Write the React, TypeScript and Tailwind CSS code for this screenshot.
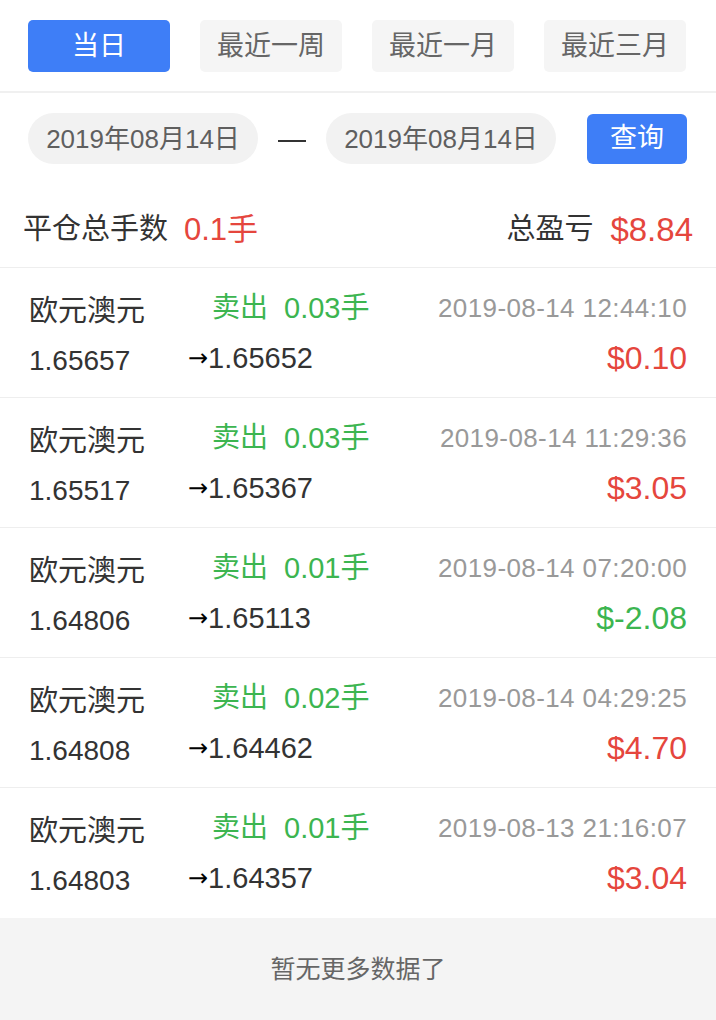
import React from "react";

interface Trade {
  name: string;
  lots: string;
  time: string;
  open: string;
  close: string;
  profit: string;
  win: boolean;
}

const trades: Trade[] = [
  { name: "欧元澳元", lots: "0.03手", time: "2019-08-14 12:44:10", open: "1.65657", close: "1.65652", profit: "$0.10", win: true },
  { name: "欧元澳元", lots: "0.03手", time: "2019-08-14 11:29:36", open: "1.65517", close: "1.65367", profit: "$3.05", win: true },
  { name: "欧元澳元", lots: "0.01手", time: "2019-08-14 07:20:00", open: "1.64806", close: "1.65113", profit: "$-2.08", win: false },
  { name: "欧元澳元", lots: "0.02手", time: "2019-08-14 04:29:25", open: "1.64808", close: "1.64462", profit: "$4.70", win: true },
  { name: "欧元澳元", lots: "0.01手", time: "2019-08-13 21:16:07", open: "1.64803", close: "1.64357", profit: "$3.04", win: true },
];

const tabs = ["当日", "最近一周", "最近一月", "最近三月"];

const TradeRow = ({ trade }: { trade: Trade }) => {
  return (
    <div className="h-[130px] border-b border-[#eeeeee] px-[29px] pt-[20px] last:border-b-0">
      <div className="flex items-center h-[40px]">
        <span className="w-[183px] text-[29px] text-[#333333] pt-[7px]">{trade.name}</span>
        <span className="text-[28px] text-[#3cb550]">卖出</span>
        <span className="ml-[16px] text-[29px] text-[#3cb550]">{trade.lots}</span>
        <span className="ml-auto text-[26px] tracking-[0.4px] text-[#999999]">{trade.time}</span>
      </div>
      <div className="flex items-center h-[40px] mt-[10px]">
        <span className="w-[159px] text-[28px] text-[#333333] pt-[6px]">{trade.open}</span>
        <span className="text-[24px] text-black font-['DejaVu_Sans',sans-serif]">→</span>
        <span className="text-[29px] text-[#333333]">{trade.close}</span>
        <span className={`ml-auto text-[32px] ${trade.win ? "text-[#e5463d]" : "text-[#3cb550]"}`}>
          {trade.profit}
        </span>
      </div>
    </div>
  );
};

export default function App() {
  return (
    <div className="w-[716px] min-h-[1020px] bg-white font-['Liberation_Sans','Noto_Sans_CJK_SC',sans-serif] leading-none">
      {/* period tabs */}
      <div className="flex gap-[30px] px-[28px] pt-[20px] pb-[19px] border-b-2 border-[#f0f0f0]">
        {tabs.map((t, i) => (
          <button
            key={t}
            className={`w-[142px] h-[52px] rounded-[5px] text-[27px] ${
              i === 0 ? "bg-[#3e7ef7] text-white" : "bg-[#f5f5f5] text-[#666666]"
            }`}
          >
            {t}
          </button>
        ))}
      </div>

      {/* date range */}
      <div className="flex items-center px-[28px] pt-[20px]">
        <div className="w-[230px] h-[51px] rounded-full bg-[#f2f2f2] flex items-center justify-center text-[26px] text-[#5f5f5f]">
          2019年08月14日
        </div>
        <div className="w-[28px] h-[2px] bg-[#333333] mx-[20px] mt-[4px]" />
        <div className="w-[230px] h-[51px] rounded-full bg-[#f2f2f2] flex items-center justify-center text-[26px] text-[#5f5f5f]">
          2019年08月14日
        </div>
        <button className="ml-auto mr-[1px] w-[100px] h-[50px] rounded-[6px] bg-[#3e7ef7] text-white text-[27px]">
          查询
        </button>
      </div>

      {/* summary */}
      <div className="flex items-center h-[104px] px-[23px] pt-[28px] border-b border-[#eeeeee]">
        <span className="text-[29px] text-[#333333]">平仓总手数</span>
        <span className="ml-[16px] text-[31px] text-[#e5463d]">0.1手</span>
        <span className="ml-auto text-[29px] text-[#333333]">总盈亏</span>
        <span className="ml-[17px] text-[33px] text-[#e5463d]">$8.84</span>
      </div>

      {/* trade list */}
      <div>
        {trades.map((trade, i) => (
          <TradeRow key={i} trade={trade} />
        ))}
      </div>

      {/* footer */}
      <div className="h-[102px] bg-[#f4f4f4] flex items-center justify-center text-[25px] text-[#666666]">
        暂无更多数据了
      </div>
    </div>
  );
}
